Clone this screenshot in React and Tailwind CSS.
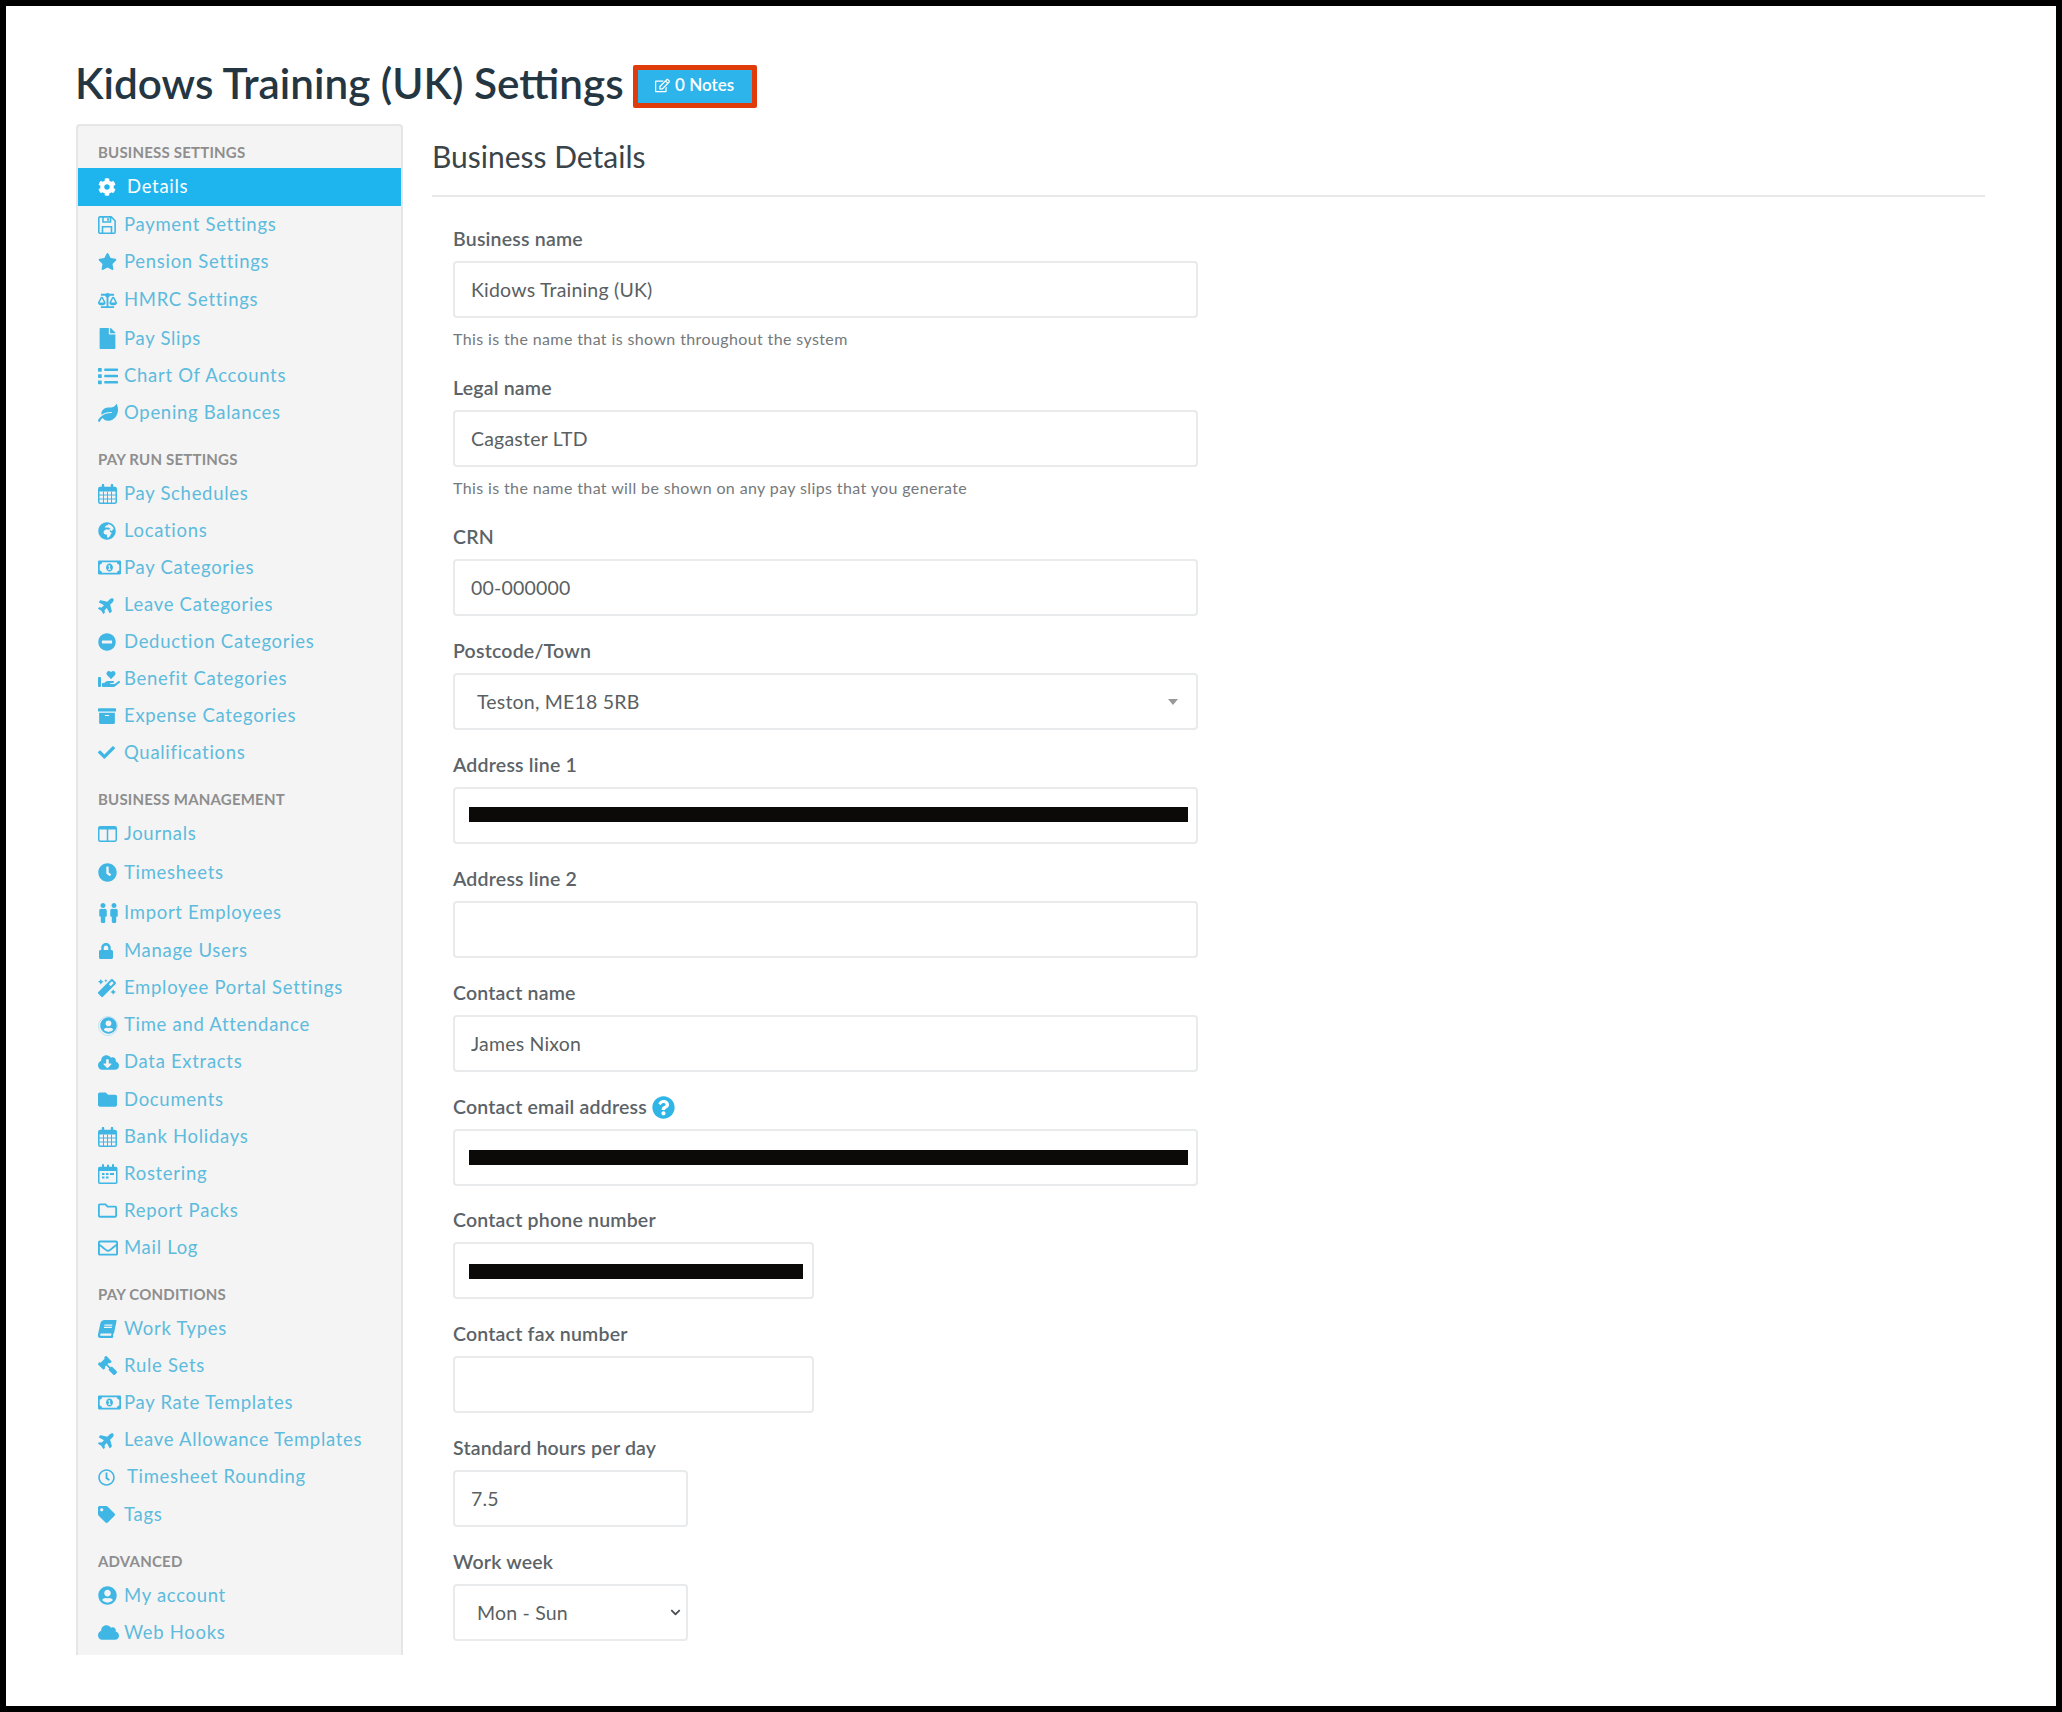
import React from "react";
import {
  FaCog, FaStar, FaBalanceScale, FaFile, FaList, FaLeaf, FaGlobeAfrica, FaRegMoneyBillAlt, FaPlane,
  FaMinusCircle, FaHandHoldingHeart, FaArchive, FaCheck, FaClock, FaMale, FaLock, FaMagic, FaUserCircle,
  FaCloudDownloadAlt, FaFolder, FaRegFolder, FaRegEnvelope, FaBook, FaGavel, FaRegClock, FaTag, FaCloud,
  FaRegEdit, FaQuestionCircle, FaChevronDown,
} from "react-icons/fa";

const font = { fontFamily: '"Lato", "Liberation Sans", sans-serif' };

const Calendar = () => (
  <svg width="19" height="20" viewBox="0 0 19 20" fill="none" stroke="currentColor">
    <rect x="0.75" y="3.5" width="17.5" height="15.75" rx="1.5" strokeWidth="1.5" />
    <rect x="1" y="3.5" width="17" height="4" fill="currentColor" stroke="none" />
    <path d="M1 11h17M1 15h17M5.5 7.5v11.5M9.5 7.5v11.5M13.5 7.5v11.5" strokeWidth="1" />
    <path d="M5 1v4M14 1v4" strokeWidth="2.4" strokeLinecap="round" />
  </svg>
);
const Roster = () => (
  <svg width="20" height="20" viewBox="0 0 20 20" fill="none" stroke="currentColor">
    <rect x="0.75" y="3.5" width="18" height="15.75" rx="1" strokeWidth="1.5" />
    <rect x="1" y="3.5" width="17.5" height="3.5" fill="currentColor" stroke="none" />
    <path d="M5 1v4M10 1.5v3M15 1v4" strokeWidth="2" strokeLinecap="round" />
    <path d="M4 10h2.5M8 10h2.5M12 10h4M4 13.5h2.5M8 13.5h2.5" strokeWidth="2" />
  </svg>
);
const Columns = () => (
  <svg width="19" height="16" viewBox="0 0 19 16" fill="none" stroke="currentColor" strokeWidth="1.5">
    <rect x="0.75" y="0.75" width="17.5" height="14.5" rx="1.5" />
    <path d="M9.5 1v14" />
    <rect x="1" y="1" width="17" height="2.5" fill="currentColor" stroke="none" />
  </svg>
);
const Floppy = () => (
  <svg width="18" height="18" viewBox="0 0 18 18" fill="none" stroke="currentColor" strokeWidth="1.6">
    <path d="M1.8 0.9h11.4l3.9 3.9v11.4a1 1 0 0 1-1 1H1.8a1 1 0 0 1-1-1V1.9a1 1 0 0 1 1-1z" />
    <path d="M4.5 17v-6.2h9V17" />
    <path d="M5 1v5h7.5V1" />
    <path d="M10 2.2v2.6" strokeWidth="1.8" />
  </svg>
);
const Benefit = () => (
  <span className="flex items-end gap-[1px]">
    <span className="mb-[1px] h-[10px] w-[3px] rounded-[1px] bg-current" />
    <FaHandHoldingHeart size={18} />
  </span>
);
const TwoMen = () => (
  <span className="flex gap-[1px]">
    <FaMale size={20} className="w-[10px]" />
    <FaMale size={20} className="w-[10px]" />
  </span>
);
const AccountRing = () => (
  <span className="mt-[2px] flex h-[20px] w-[20px] items-center justify-center rounded-full border border-[#bfe3f3]">
    <FaUserCircle size={17} />
  </span>
);
const Plane = () => <FaPlane size={18} className="-rotate-45" />;

const sections = [
  {
    title: "BUSINESS SETTINGS",
    items: [
      { label: "Details", Icon: () => <FaCog size={18} />, active: true, h: "h-[38px]", w: "w-[29px]" },
      { label: "Payment Settings", Icon: Floppy, h: "h-[37px]" },
      { label: "Pension Settings", Icon: () => <FaStar size={19} />, h: "h-[37px]" },
      { label: "HMRC Settings", Icon: () => <FaBalanceScale size={19} />, h: "h-[40px]" },
      { label: "Pay Slips", Icon: () => <FaFile size={21} className="-ml-[1px]" />, h: "h-[37px]" },
      { label: "Chart Of Accounts", Icon: () => <FaList size={20} />, h: "h-[37px]" },
      { label: "Opening Balances", Icon: () => <FaLeaf size={20} />, h: "h-[37px]" },
    ],
  },
  {
    title: "PAY RUN SETTINGS",
    items: [
      { label: "Pay Schedules", Icon: Calendar, h: "h-[37px]" },
      { label: "Locations", Icon: () => <FaGlobeAfrica size={18} />, h: "h-[37px]" },
      { label: "Pay Categories", Icon: () => <FaRegMoneyBillAlt size={23} />, h: "h-[37px]" },
      { label: "Leave Categories", Icon: Plane, h: "h-[37px]" },
      { label: "Deduction Categories", Icon: () => <FaMinusCircle size={18} />, h: "h-[37px]" },
      { label: "Benefit Categories", Icon: Benefit, h: "h-[37px]" },
      { label: "Expense Categories", Icon: () => <FaArchive size={18} />, h: "h-[37px]" },
      { label: "Qualifications", Icon: () => <FaCheck size={17} />, h: "h-[37px]" },
    ],
  },
  {
    title: "BUSINESS MANAGEMENT",
    items: [
      { label: "Journals", Icon: Columns, h: "h-[37px]" },
      { label: "Timesheets", Icon: () => <FaClock size={19} />, h: "h-[41px]" },
      { label: "Import Employees", Icon: TwoMen, h: "h-[39px]" },
      { label: "Manage Users", Icon: () => <FaLock size={16} />, h: "h-[37px]" },
      { label: "Employee Portal Settings", Icon: () => <FaMagic size={18} />, h: "h-[37px]" },
      { label: "Time and Attendance", Icon: AccountRing, h: "h-[37px]" },
      { label: "Data Extracts", Icon: () => <FaCloudDownloadAlt size={21} />, h: "h-[38px]" },
      { label: "Documents", Icon: () => <FaFolder size={19} />, h: "h-[37px]" },
      { label: "Bank Holidays", Icon: Calendar, h: "h-[37px]" },
      { label: "Rostering", Icon: Roster, h: "h-[37px]" },
      { label: "Report Packs", Icon: () => <FaRegFolder size={19} />, h: "h-[37px]" },
      { label: "Mail Log", Icon: () => <FaRegEnvelope size={20} />, h: "h-[37px]" },
    ],
  },
  {
    title: "PAY CONDITIONS",
    items: [
      { label: "Work Types", Icon: () => <FaBook size={18} className="-skew-x-12" />, h: "h-[37px]" },
      { label: "Rule Sets", Icon: () => <FaGavel size={19} className="-scale-x-100" />, h: "h-[37px]" },
      { label: "Pay Rate Templates", Icon: () => <FaRegMoneyBillAlt size={23} />, h: "h-[37px]" },
      { label: "Leave Allowance Templates", Icon: Plane, h: "h-[37px]" },
      { label: "Timesheet Rounding", Icon: () => <FaRegClock size={17} />, h: "h-[38px]", w: "w-[29px]" },
      { label: "Tags", Icon: () => <FaTag size={17} />, h: "h-[37px]" },
    ],
  },
  {
    title: "ADVANCED",
    items: [
      { label: "My account", Icon: () => <FaUserCircle size={19} />, h: "h-[37px]" },
      { label: "Web Hooks", Icon: () => <FaCloud size={21} />, h: "h-[37px]" },
    ],
  },
];

function NavRow({ item }) {
  const { Icon, label, active, h, w } = item;
  return (
    <a
      className={`flex items-center pl-[20px] ${h} ${
        active ? "bg-[#1eb5ee] text-white" : "text-[#5dbbdd]"
      }`}
    >
      <span className={`flex shrink-0 items-center ${w || "w-[26px]"} ${active ? "text-white" : "text-[#3fb6e4]"}`}>
        <Icon />
      </span>
      <span className="whitespace-nowrap text-[18.5px] tracking-[0.7px]">{label}</span>
    </a>
  );
}

function Sidebar() {
  return (
    <nav className="h-[1531px] w-[327px] shrink-0 overflow-hidden rounded-t-[4px] border-x-2 border-t-2 border-[#e6e6e6] bg-[#f4f4f4] pt-[10px]">
      {sections.map((s, i) => (
        <div key={s.title} className={i === 0 ? "" : "mt-[12px]"}>
          <div className="flex h-[32px] items-center pl-[20px] text-[15px] font-bold tracking-[0.2px] text-[#8e8e8e]">{s.title}</div>
          {s.items.map((it) => (
            <NavRow key={it.label} item={it} />
          ))}
        </div>
      ))}
    </nav>
  );
}

const boxCls =
  "h-[57px] rounded-[4px] border-2 border-[#e8eaeb] bg-white text-[19.5px] tracking-[0.2px] text-[#5a5f62] outline-none";

function Label({ children }) {
  return (
    <label className="mb-[11px] flex h-[22px] items-center gap-[5px] text-[19.5px] font-semibold tracking-[0.2px] text-[#5b6368]">
      {children}
    </label>
  );
}

function Field({ label, value = "", help, width = "w-[745px]", redact, extra, gap = "mb-[24px]" }) {
  return (
    <div className={gap}>
      <Label>
        {label}
        {extra}
      </Label>
      <div className={`relative ${width}`}>
        <input readOnly defaultValue={value} className={`${boxCls} w-full pl-[16px]`} />
        {redact && <div className={`absolute left-[16px] h-[15px] bg-[#0c0a09] ${redact}`} />}
      </div>
      {help && <p className="mt-[10px] flex h-[25px] items-center pb-[3px] text-[16px] tracking-[0.38px] text-[#75797c]">{help}</p>}
    </div>
  );
}

export default function App() {
  return (
    <div className="h-[1712px] overflow-hidden border-[6px] border-black bg-white text-[#27353e]" style={font}>
      <div className="flex items-center pl-[69px] pt-[59px]">
        <h1 className="flex h-[43px] items-center whitespace-nowrap pb-[7px] text-[42.25px] font-semibold text-[#243642]">
          Kidows Training (UK) Settings
        </h1>
        <button className="ml-[9px] flex h-[43px] w-[124px] items-center justify-center gap-[5px] rounded-[2px] border-[5px] border-[#df3b0b] bg-[#2db4ea] pb-[3px] text-[17px] font-semibold text-white">
          <FaRegEdit size={15} />0 Notes
        </button>
      </div>
      <div className="mt-[16px] flex pl-[70px]">
        <Sidebar />
        <main className="ml-[29px] w-[1553px]">
          <h2 className="flex h-[73px] items-center border-b-2 border-[#e8e8e8] pb-[7px] text-[30px] text-[#3a4449]">
            Business Details
          </h2>
          <form className="pl-[21px] pt-[31px]">
            <Field label="Business name" value="Kidows Training (UK)" help="This is the name that is shown throughout the system" />
            <Field label="Legal name" value="Cagaster LTD" help="This is the name that will be shown on any pay slips that you generate" />
            <Field label="CRN" value="00-000000" />
            <div className="mb-[24px]">
              <Label>Postcode/Town</Label>
              <div className={`${boxCls} flex w-[745px] items-center justify-between pl-[22px] pr-[18px]`}>
                <span>Teston, ME18 5RB</span>
                <span className="h-0 w-0 border-x-[5px] border-t-[6px] border-x-transparent border-t-[#999]" />
              </div>
            </div>
            <Field label="Address line 1" redact="right-[10px] top-[20px]" />
            <Field label="Address line 2" />
            <Field label="Contact name" value="James Nixon" />
            <Field
              label="Contact email address"
              redact="right-[10px] top-[21px]"
              extra={<FaQuestionCircle size={23} className="text-[#2fb5e6]" />}
              gap="mb-[23px]"
            />
            <Field label="Contact phone number" width="w-[361px]" redact="right-[11px] top-[22px]" />
            <Field label="Contact fax number" width="w-[361px]" />
            <Field label="Standard hours per day" value="7.5" width="w-[235px]" />
            <div>
              <Label>Work week</Label>
              <div className="relative w-[235px]">
                <select className={`${boxCls} w-full appearance-none pl-[22px]`} defaultValue="Mon - Sun">
                  <option>Mon - Sun</option>
                </select>
                <FaChevronDown size={11} className="pointer-events-none absolute right-[7px] top-[23px] text-[#4a4f52]" />
              </div>
            </div>
          </form>
        </main>
      </div>
    </div>
  );
}
